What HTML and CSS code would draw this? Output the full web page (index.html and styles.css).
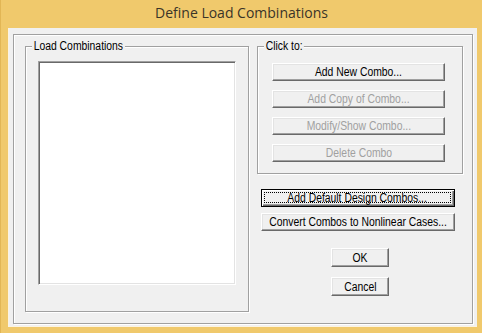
FILE: index.html
```html
<!DOCTYPE html>
<html lang="en">
<head>
  <meta charset="UTF-8">
  <title>Define Load Combinations</title>
  <link rel="stylesheet" href="styles.css">
</head>
<body>
  <div class="window">
    <!-- Title bar -->
    <div class="titlebar">Define Load Combinations</div>

    <!-- Client area -->
    <div class="client">
      <div class="panel">
        <div class="group group-list">
          <span class="legend">Load Combinations</span>
          <div class="listbox"></div>
        </div>

        <div class="side">
          <div class="group group-click">
            <span class="legend">Click to:</span>
            <button class="btn btn-action"><span class="txt">Add New Combo...</span></button>
            <button class="btn btn-action" disabled><span class="txt">Add Copy of Combo...</span></button>
            <button class="btn btn-action" disabled><span class="txt">Modify/Show Combo...</span></button>
            <button class="btn btn-action" disabled><span class="txt">Delete Combo</span></button>
          </div>

          <div class="wide-buttons">
            <button class="btn btn-wide btn-default"><span class="focus"><span class="txt">Add Default Design Combos...</span></span></button>
            <button class="btn btn-wide"><span class="txt">Convert Combos to Nonlinear Cases...</span></button>
          </div>

          <div class="dialog-buttons">
            <button class="btn btn-small"><span class="txt">OK</span></button>
            <button class="btn btn-small"><span class="txt">Cancel</span></button>
          </div>
        </div>
      </div>
    </div>
  </div>
</body>
</html>
```

FILE: styles.css
```css
/* General Reset */
* {
  margin: 0;
  padding: 0;
  box-sizing: border-box;
}

body {
  width: 482px;
  height: 333px;
  overflow: hidden;
  background-color: #f0c96c;
  font-family: 'Liberation Sans', Arial, sans-serif;
  font-size: 12.5px;
  color: #000;
}

/* narrow system-dialog lettering */
.txt {
  display: inline-block;
  transform: scaleX(0.83);
  white-space: nowrap;
}

/* Window frame */
.window {
  height: 333px;
  border-left: 1px solid #e2b655;
}

.titlebar {
  height: 28px;
  line-height: 26px;
  text-align: center;
  font-family: 'Open Sans', 'Noto Sans', sans-serif;
  font-size: 14px;
  color: #3a3428;
}

.client {
  margin-left: 7px;
  width: 469px;
  height: 299px;
  padding: 6px 3px 2px 4px;
  background-color: #f0f0f0;
  border-left: 1px solid #fbf3e2;
  border-bottom: 1px solid #fbf3e2;
}

/* Etched panel */
.panel {
  display: flex;
  align-items: flex-start;
  width: 460px;
  height: 290px;
  padding: 11px 0 0 11px;
  border: 1px solid #a0a0a0;
  box-shadow: inset 1px 1px 0 #fff, 1px 1px 0 #fff;
}

/* Group boxes */
.group {
  position: relative;
  border: 1px solid #a0a0a0;
  box-shadow: inset 1px 1px 0 #fff, 1px 1px 0 #fff;
}

.legend {
  position: absolute;
  top: -8px;
  left: 6px;
  padding: 0 2px;
  line-height: 14px;
  background-color: #f0f0f0;
  white-space: nowrap;
  transform: scaleX(0.83);
  transform-origin: left center;
}

.group-list {
  width: 224px;
  height: 266px;
  padding: 14px 0 0 12px;
}

.listbox {
  width: 198px;
  height: 224px;
  background-color: #fff;
  border: 1px solid;
  border-color: #a0a0a0 #fff #fff #a0a0a0;
  box-shadow: inset 1px 1px 0 #696969, inset -1px -1px 0 #e3e3e3;
}

.side {
  margin-left: 8px;
  width: 206px;
}

.group-click {
  display: flex;
  flex-direction: column;
  gap: 9px;
  width: 206px;
  height: 128px;
  padding: 16px 0 0 14px;
}

/* Classic buttons */
.btn {
  display: flex;
  align-items: center;
  justify-content: center;
  height: 18px;
  font-family: inherit;
  font-size: 12.5px;
  line-height: 14px;
  white-space: nowrap;
  color: #000;
  background-color: #f0f0f0;
  border: 1px solid;
  border-color: #fff #696969 #696969 #fff;
  box-shadow: inset -1px -1px 0 #a0a0a0, inset 1px 1px 0 #e3e3e3;
}

.btn:disabled {
  color: #a0a0a0;
}

.btn-action {
  width: 173px;
}

.wide-buttons {
  display: flex;
  flex-direction: column;
  gap: 6px;
  margin: 15px 0 0 4px;
}

.btn-wide {
  width: 194px;
}

.btn-default {
  border-color: #000;
  box-shadow: inset 1px 1px 0 #fff, inset -1px -1px 0 #696969, inset -2px -2px 0 #a0a0a0;
  padding: 2px 3px 3px 2px;
}

.focus {
  display: flex;
  align-items: center;
  justify-content: center;
  width: 100%;
  height: 100%;
  border: 1px dotted #000;
}

.dialog-buttons {
  display: flex;
  flex-direction: column;
  gap: 10px;
  margin: 17px 0 0 74px;
}

.btn-small {
  width: 58px;
  height: 19px;
}
```
